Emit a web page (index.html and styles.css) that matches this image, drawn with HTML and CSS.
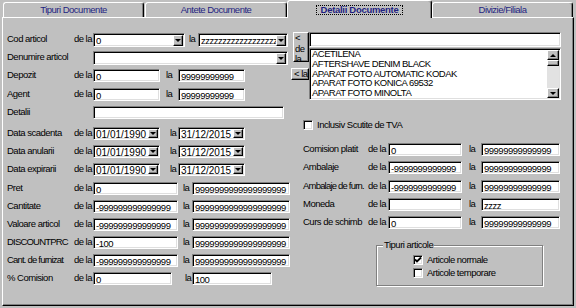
FILE: index.html
```html
<!DOCTYPE html>
<html lang="ro">
<head>
  <meta charset="UTF-8">
  <title>Detalii Documente</title>
  <link rel="stylesheet" href="styles.css">
</head>
<body>
  <div class="window">
    <div class="tabs">
      <div class="tab tab-1">Tipuri Documente</div>
      <div class="tab tab-2">Antete Documente</div>
      <div class="tab tab-3 active"><span class="focus">Detalii Documente</span></div>
      <div class="tab tab-4">Divizie/Filiala</div>
    </div>

    <div class="panel">
      <!-- filtre pe stanga -->
      <div class="col-left">
        <div class="row">
          <span class="lbl">Cod articol</span><span class="dela">de la</span>
          <div class="field combo w-cod"><span class="val">0</span><span class="drop"></span></div>
          <span class="la la-cod">la</span>
          <div class="field combo w-cod2"><span class="val">zzzzzzzzzzzzzzzzzzzz</span><span class="drop"></span></div>
        </div>
        <div class="row">
          <span class="lbl">Denumire articol</span><span class="dela"></span>
          <div class="field combo w-den"><span class="val"></span><span class="drop"></span></div>
        </div>
        <div class="row">
          <span class="lbl">Depozit</span><span class="dela">de la</span>
          <div class="field w-s">0</div>
          <span class="la la-s">la</span>
          <div class="field w-s2">99999999999</div>
        </div>
        <div class="row">
          <span class="lbl">Agent</span><span class="dela">de la</span>
          <div class="field w-s">0</div>
          <span class="la la-s">la</span>
          <div class="field w-s2">99999999999</div>
        </div>
        <div class="row">
          <span class="lbl">Detalii</span><span class="dela"></span>
          <div class="field w-det"></div>
        </div>

        <div class="row first-date">
          <span class="lbl">Data scadenta</span><span class="dela">de la</span>
          <div class="field date w-s"><span class="val">01/01/1990</span><span class="drop"></span></div>
          <span class="la la-d">la</span>
          <div class="field date w-s2"><span class="val">31/12/2015</span><span class="drop"></span></div>
        </div>
        <div class="row">
          <span class="lbl">Data anularii</span><span class="dela">de la</span>
          <div class="field date w-s"><span class="val">01/01/1990</span><span class="drop"></span></div>
          <span class="la la-d">la</span>
          <div class="field date w-s2"><span class="val">31/12/2015</span><span class="drop"></span></div>
        </div>
        <div class="row">
          <span class="lbl">Data expirarii</span><span class="dela">de la</span>
          <div class="field date w-s"><span class="val">01/01/1990</span><span class="drop"></span></div>
          <span class="la la-d">la</span>
          <div class="field date w-s2"><span class="val">31/12/2015</span><span class="drop"></span></div>
        </div>

        <div class="row">
          <span class="lbl">Pret</span><span class="dela">de la</span>
          <div class="field w-n">0</div>
          <span class="la la-n">la</span>
          <div class="field w-n2">9999999999999999999</div>
        </div>
        <div class="row">
          <span class="lbl">Cantitate</span><span class="dela">de la</span>
          <div class="field w-n">-999999999999999</div>
          <span class="la la-n">la</span>
          <div class="field w-n2">9999999999999999999</div>
        </div>
        <div class="row">
          <span class="lbl">Valoare articol</span><span class="dela">de la</span>
          <div class="field w-n">-999999999999999</div>
          <span class="la la-n">la</span>
          <div class="field w-n2">9999999999999999999</div>
        </div>
        <div class="row">
          <span class="lbl tight">DISCOUNTPRC</span><span class="dela">de la</span>
          <div class="field w-n">-100</div>
          <span class="la la-n">la</span>
          <div class="field w-n2">9999999999999999999</div>
        </div>
        <div class="row">
          <span class="lbl tight">Cant. de furnizat</span><span class="dela">de la</span>
          <div class="field w-n">-999999999999999</div>
          <span class="la la-n">la</span>
          <div class="field w-n2">9999999999999999999</div>
        </div>
        <div class="row">
          <span class="lbl">% Comision</span><span class="dela">de la</span>
          <div class="field w-c">0</div>
          <span class="la la-c">la</span>
          <div class="field w-c2">100</div>
        </div>
      </div>

      <!-- lista articole + filtre pe dreapta -->
      <div class="col-right">
        <div class="top-block">
          <div class="btn-col">
            <div class="btn btn-dela">&lt;<br>de<br>la</div>
            <div class="btn btn-la">&lt; la</div>
          </div>
          <div class="pick">
            <div class="field search"></div>
            <div class="listbox">
              <div class="items">
                <div>ACETILENA</div>
                <div>AFTERSHAVE DENIM BLACK</div>
                <div>APARAT FOTO AUTOMATIC KODAK</div>
                <div>APARAT FOTO KONICA 69532</div>
                <div>APARAT FOTO MINOLTA</div>
              </div>
              <div class="scroll">
                <span class="sbtn up"></span>
                <span class="thumb"></span>
                <span class="track"></span>
                <span class="sbtn down"></span>
              </div>
            </div>
          </div>
        </div>

        <label class="chk-line tva"><span class="chk"></span>Inclusiv Scutite de TVA</label>

        <div class="rrows">
          <div class="rrow">
            <span class="rlbl">Comision platit</span><span class="dela">de la</span>
            <div class="field w-r1">0</div>
            <span class="la la-r">la</span>
            <div class="field w-r2">99999999999999</div>
          </div>
          <div class="rrow">
            <span class="rlbl">Ambalaje</span><span class="dela">de la</span>
            <div class="field w-r1">-9999999999999</div>
            <span class="la la-r">la</span>
            <div class="field w-r2">99999999999999</div>
          </div>
          <div class="rrow">
            <span class="rlbl tight">Ambalaje de furn.</span><span class="dela">de la</span>
            <div class="field w-r1">-9999999999999</div>
            <span class="la la-r">la</span>
            <div class="field w-r2">99999999999999</div>
          </div>
          <div class="rrow">
            <span class="rlbl">Moneda</span><span class="dela">de la</span>
            <div class="field w-r1"></div>
            <span class="la la-r">la</span>
            <div class="field w-r2">zzzz</div>
          </div>
          <div class="rrow">
            <span class="rlbl">Curs de schimb</span><span class="dela">de la</span>
            <div class="field w-r1">0</div>
            <span class="la la-r">la</span>
            <div class="field w-r2">99999999999999</div>
          </div>
        </div>

        <div class="group">
          <div class="group-title">Tipuri articole</div>
          <div class="opts">
            <label class="chk-line">
              <span class="chk"><svg width="8" height="8" viewBox="0 0 8 8"><path d="M1 3.5 L3 5.5 L7 1.5" stroke="#000" stroke-width="1.8" fill="none"/></svg></span>Articole normale
            </label>
            <label class="chk-line"><span class="chk"></span>Articole temporare</label>
          </div>
        </div>
      </div>
    </div>
  </div>
</body>
</html>
```

FILE: styles.css
```css
* { box-sizing: border-box; }
body {
  margin: 0;
  background: #c0c0c0;
  font-family: "Liberation Sans", Arial, sans-serif;
  font-size: 9.5px;
  letter-spacing: -0.5px;
  color: #000;
}
.window {
  width: 576px;
  height: 308px;
  overflow: hidden;
}
.tight { letter-spacing: -0.8px; }

/* tabs */
.tabs {
  display: flex;
  align-items: flex-end;
  height: 17px;
  padding-left: 3px;
}
.tab {
  height: 15px;
  border: 1px solid #fff;
  border-bottom: 0;
  border-right-color: #000;
  box-shadow: inset -1px 0 #808080;
  border-radius: 3px 3px 0 0;
  color: #1f1f80;
  text-align: center;
  line-height: 13px;
  white-space: nowrap;
}
.tab-1 { width: 141px; margin-right: 1px; }
.tab-2 { width: 142px; }
.tab-3 { width: 145px; }
.tab-4 { width: 141px; }
.tab.active {
  height: 18px;
  margin-bottom: -1px;
  position: relative;
  z-index: 1;
  background: #c0c0c0;
}
.focus {
  display: inline-block;
  margin-top: 4px;
  padding: 0 4px;
  border: 1px dotted #000;
  line-height: 8px;
  font-weight: bold;
  letter-spacing: -0.3px;
}

/* panel */
.panel {
  display: flex;
  width: 572px;
  height: 289px;
  margin-left: 2px;
  border: 1px solid;
  border-color: #fff #000 #000 #fff;
  box-shadow: inset -1px -1px #808080;
}
.col-left {
  width: 287px;
  padding: 15px 0 0 4px;
  display: flex;
  flex-direction: column;
  gap: 4.2px;
}
.row {
  display: flex;
  align-items: flex-start;
  height: 14px;
  line-height: 11px;
  white-space: nowrap;
}
.row.first-date { margin-top: 3px; }
.lbl { width: 64px; flex: none; }
.dela { width: 21px; margin-right: 1px; text-align: right; flex: none; }
.la { flex: none; }

.field {
  flex: none;
  height: 13px;
  background: #fff;
  border: 1px solid;
  border-color: #808080 #fff #fff #808080;
  box-shadow: inset 1px 1px #000, inset -1px -1px #dfdfdf;
  padding: 2px 0 0 2px;
  line-height: 10px;
  overflow: hidden;
  white-space: nowrap;
}
.combo, .date {
  display: flex;
  align-items: flex-start;
  padding: 1px 1px 0 2px;
  line-height: 11px;
}
.combo { height: 14px; }
.val { flex: 1; overflow: hidden; }
.date .val {
  font-size: 10px;
  letter-spacing: 0;
}

.drop, .sbtn, .thumb, .btn {
  background: #c0c0c0;
  border: 1px solid;
  border-color: #fff #000 #000 #fff;
  box-shadow: inset -1px -1px #808080;
}
.drop {
  width: 10px;
  height: 11px;
  display: flex;
  justify-content: center;
  align-items: center;
  flex: none;
}
.date .drop { height: 9px; }
.drop::after, .sbtn.down::after {
  content: "";
  border-left: 3px solid transparent;
  border-right: 3px solid transparent;
  border-top: 3px solid #000;
}
.sbtn.up::after {
  content: "";
  border-left: 3px solid transparent;
  border-right: 3px solid transparent;
  border-bottom: 3px solid #000;
}

.w-cod { width: 92px; }
.la-cod { width: 13px; padding-left: 4px; }
.w-cod2 { width: 90px; }
.w-den { width: 195px; }
.w-s { width: 67px; }
.la-s { width: 18px; padding-left: 6px; }
.la-d { width: 18px; padding-left: 10px; }
.w-s2 { width: 67px; }
.w-det { width: 191px; }
.w-n { width: 85px; }
.la-n { width: 14px; padding-left: 5px; }
.w-n2 { width: 98px; }
.w-c { width: 79px; }
.la-c { width: 20px; padding-left: 13px; }
.w-c2 { width: 80px; }

/* right side */
.col-right {
  flex: 1;
  padding-top: 14px;
}
.top-block {
  display: flex;
  height: 68px;
}
.btn-col {
  width: 19px;
  display: flex;
  flex-direction: column;
  align-items: flex-end;
  gap: 6px;
}
.btn {
  padding-left: 2px;
  line-height: 10px;
  white-space: nowrap;
}
.btn-dela { width: 16px; height: 30px; padding-left: 1px; line-height: 10.5px; }
.btn-la { width: 18px; height: 12px; }

.pick { width: 252px; }
.field.search { height: 15px; }
.listbox {
  display: flex;
  height: 52px;
  margin-top: 1px;
  padding: 1px;
  background: #fff;
  border: 1px solid;
  border-color: #808080 #fff #fff #808080;
  box-shadow: inset 1px 1px #000, inset -1px -1px #dfdfdf;
}
.items {
  flex: 1;
  margin-top: -1px;
  padding-left: 1px;
  line-height: 9.8px;
  white-space: nowrap;
}
.scroll {
  width: 12px;
  display: flex;
  flex-direction: column;
}
.sbtn {
  height: 10px;
  display: flex;
  justify-content: center;
  align-items: center;
}
.thumb { height: 6px; }
.track { flex: 1; background: #e2e2e2; }

.chk-line {
  display: flex;
  align-items: center;
  gap: 4px;
  height: 10px;
  line-height: 10px;
  white-space: nowrap;
}
.chk-line.tva { margin: 20px 0 0 13px; }
.chk {
  width: 10px;
  height: 10px;
  flex: none;
  display: flex;
  align-items: center;
  justify-content: center;
  background: #fff;
  border: 1px solid;
  border-color: #808080 #fff #fff #808080;
  box-shadow: inset 1px 1px #000, inset -1px -1px #dfdfdf;
}

.rrows {
  margin-top: 13px;
  display: flex;
  flex-direction: column;
  gap: 5.25px;
}
.rrow {
  display: flex;
  align-items: flex-start;
  height: 13px;
  padding-left: 13px;
  line-height: 11px;
  white-space: nowrap;
}
.rlbl { width: 61px; flex: none; }
.rrow .dela { width: 22px; margin-right: 2px; }
.w-r1 { width: 74px; }
.la-r { width: 19px; padding-left: 7px; }
.w-r2 { width: 79px; }

/* chenar Tipuri articole */
.group {
  margin: 16px 0 0 86px;
  width: 167px;
  height: 41px;
  border: 1px solid #808080;
  box-shadow: inset 1px 1px #fff, 1px 1px #fff;
}
.group-title {
  display: table;
  margin: -6px 0 0 6px;
  padding: 0 1px;
  line-height: 10px;
  background: #c0c0c0;
}
.opts {
  padding: 5px 0 0 36px;
  display: flex;
  flex-direction: column;
  gap: 3px;
}
```
